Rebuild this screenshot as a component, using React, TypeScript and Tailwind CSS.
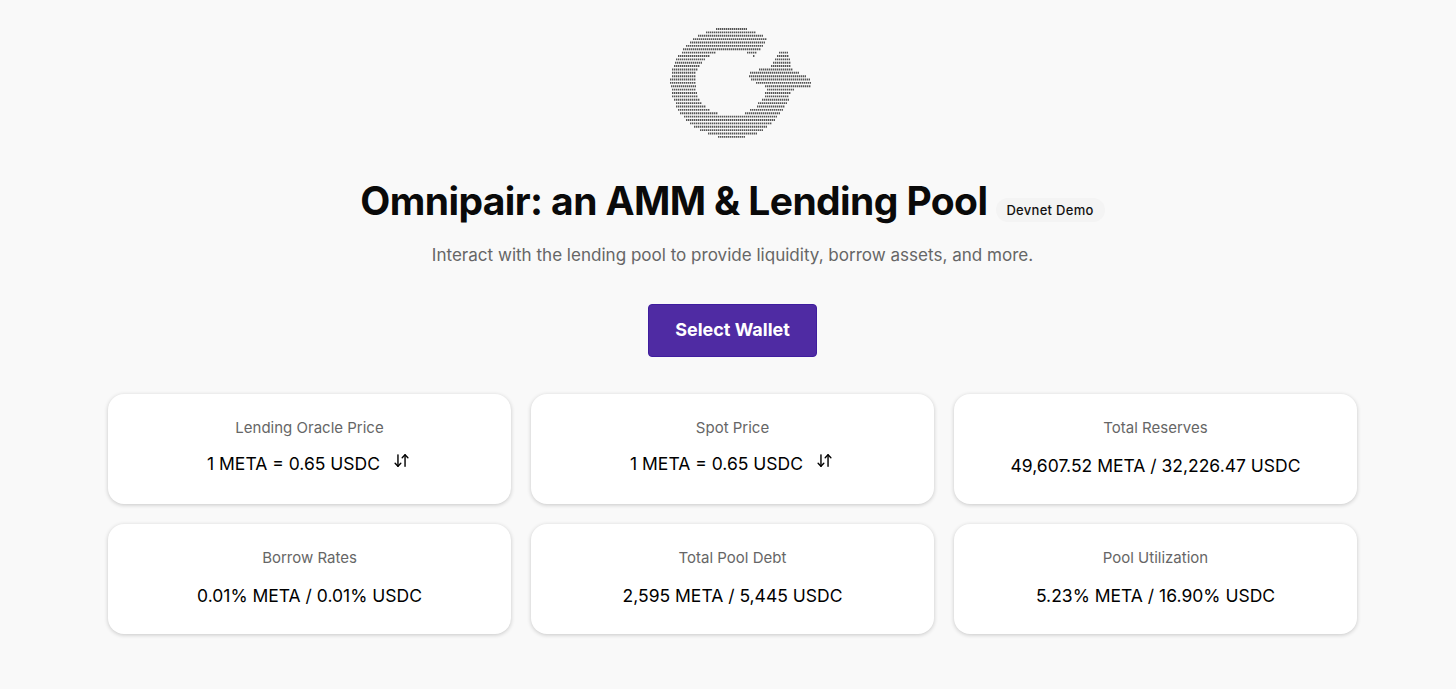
import { ArrowDownUp } from "lucide-react";

// [left, right] spans per row of the dotted logo, top to bottom
const logoRows: number[][] = [
  [66, 97], [56, 106], [48, 113], [43, 117], [40, 115], [36, 113], [33, 111],
  [32, 66, 97, 107, 129, 138],
  [28, 60, 103, 105, 127, 139],
  [26, 55, 125, 140],
  [25, 52, 123, 141],
  [24, 50, 121, 141],
  [22, 48, 109, 143],
  [22, 46, 100, 149],
  [22, 46, 99, 156],
  [20, 46, 101, 160],
  [20, 46, 106, 161],
  [21, 46, 115, 161],
  [22, 46, 117, 144],
  [22, 47, 115, 141],
  [22, 48, 115, 139],
  [24, 50, 112, 139],
  [26, 52, 108, 137],
  [26, 56, 107, 135],
  [28, 60, 100, 133],
  [30, 68, 95, 130],
  [34, 127],
  [36, 125],
  [40, 122],
  [44, 117],
  [50, 113],
  [58, 107],
  [68, 95],
];

function Logo() {
  return (
    <svg width="180" height="114" viewBox="-7 0 180 114" className="block">
      {logoRows.map((row, i) =>
        row.map((v, j) =>
          j % 2 === 0 ? (
            <line
              key={`${i}-${j}`}
              x1={v}
              x2={row[j + 1]}
              y1={4 + i * 3.37}
              y2={4 + i * 3.37}
              stroke="#555"
              strokeWidth="1.9"
              strokeDasharray="1.4 0.6"
            />
          ) : null
        )
      )}
    </svg>
  );
}

const stats = [
  { label: "Lending Oracle Price", value: "1 META = 0.65 USDC", swap: true },
  { label: "Spot Price", value: "1 META = 0.65 USDC", swap: true },
  { label: "Total Reserves", value: "49,607.52 META / 32,226.47 USDC" },
  { label: "Borrow Rates", value: "0.01% META / 0.01% USDC" },
  { label: "Total Pool Debt", value: "2,595 META / 5,445 USDC" },
  { label: "Pool Utilization", value: "5.23% META / 16.90% USDC" },
];

export default function App() {
  return (
    <div className="flex h-[689px] flex-col items-center overflow-hidden bg-[#f9f9f9] pl-[9px] pt-[25px] font-['Inter',sans-serif]">
      <Logo />
      <div className="mt-[37px] flex items-center gap-[9px]">
        <h1 className="text-[39px] leading-[50px] font-bold tracking-[-0.6px] text-[#0a0a0a]">
          Omnipair: an AMM &amp; Lending Pool
        </h1>
        <span className="mt-[17px] rounded-full bg-[#f4f4f4] pl-[10px] pr-[11px] py-[4px] text-[13px] leading-4 font-medium tracking-[0.3px] text-[#111]">
          Devnet Demo
        </span>
      </div>
      <p className="mt-[17px] text-[17.06px] leading-6 text-[#666]">
        Interact with the lending pool to provide liquidity, borrow assets, and more.
      </p>
      <button className="mt-[37px] h-[53px] w-[169px] rounded-[4px] border border-[#3f1d9e] bg-[#4f2ba3] pb-[2px] text-[18px] font-bold text-white">
        Select Wallet
      </button>
      <div className="mt-[37px] grid w-[1249px] grid-cols-3 gap-x-[20px] gap-y-[20px]">
        {stats.map((s) => (
          <div
            key={s.label}
            className="flex h-[110px] flex-col items-center rounded-[16px] bg-white pt-[24px] shadow-[0_1px_4px_rgba(0,0,0,0.2)]"
          >
            <div className="text-[15px] leading-5 text-[#666]">{s.label}</div>
            {s.swap ? (
              <div className="mt-[14px] flex items-center text-[17.5px] leading-6 text-black">
                {s.value}
                <ArrowDownUp className="ml-[13px] mr-[2px] -mt-[7px] h-[17px] w-[17px]" strokeWidth={2} />
              </div>
            ) : (
              <div className="mt-[16px] text-[17.5px] leading-6 text-black">{s.value}</div>
            )}
          </div>
        ))}
      </div>
    </div>
  );
}
